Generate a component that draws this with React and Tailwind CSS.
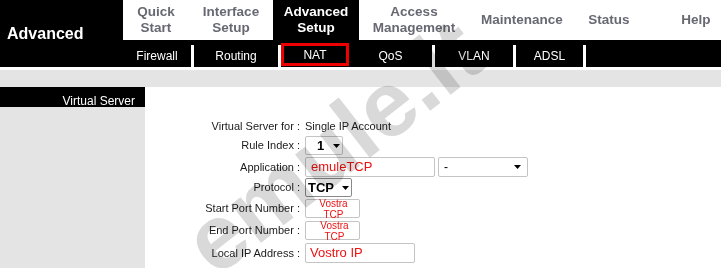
const topNav = [
  { label: ["Quick", "Start"], w: "w-[66px]" },
  { label: ["Interface", "Setup"], w: "w-[84px]" },
  { label: ["Advanced", "Setup"], w: "w-[86px]", active: true },
  { label: ["Access", "Management"], w: "w-[110px]" },
  { label: ["Maintenance"], w: "w-[106px]" },
  { label: ["Status"], w: "w-[68px]" },
];

const Arrow = () => (
  <svg width="8" height="4" viewBox="0 0 8 4" className="block">
    <path d="M0 0H7L3.5 4Z" fill="#000" />
  </svg>
);

const Sep = () => <div className="w-[3px] h-[22px] bg-white self-end" />;

const SubItem = ({ children, w }) => (
  <div className={`${w} h-[22px] self-end flex items-center justify-center`}>{children}</div>
);

const Row = ({ label, className, children }) => (
  <div className={`flex items-center ${className}`}>
    <div className="w-[155px] text-right text-[11px] text-[#1b1b1b] leading-none">{label}</div>
    <div className="ml-[5px] flex items-center gap-[3px]">{children}</div>
  </div>
);

export default function App() {
  return (
    <div className="relative w-[721px] h-[268px] overflow-hidden bg-white font-['Liberation_Sans',Arial,sans-serif]">
      {/* header */}
      <div className="flex h-[67px]">
        <div className="w-[124px] bg-black flex items-center pl-[7px] text-white font-bold text-[16px]">
          Advanced
        </div>
        <div className="flex-1 flex flex-col">
          <div className="h-[40px] flex">
            {topNav.map((n) => (
              <div
                key={n.label.join(" ")}
                className={`${n.w} flex flex-col items-center justify-center text-[13.5px] font-bold leading-[16px] ${
                  n.active ? "bg-black text-white" : "text-[#686873]"
                }`}
              >
                {n.label.map((l) => (
                  <span key={l}>{l}</span>
                ))}
              </div>
            ))}
            <div className="w-[28px]" />
            <div className="w-[50px] flex items-center justify-center text-[13.5px] font-bold text-[#686873]">Help</div>
          </div>
          <div className="h-[27px] bg-black flex text-white text-[12px]">
            <SubItem w="w-[68px]">Firewall</SubItem>
            <Sep />
            <SubItem w="w-[84px]">Routing</SubItem>
            <Sep />
            <div className="w-[68px] h-[23px] mt-[3px] border-[3px] border-[#ee0000] flex items-center justify-center">NAT</div>
            <SubItem w="w-[83px]">QoS</SubItem>
            <Sep />
            <SubItem w="w-[78px]">VLAN</SubItem>
            <Sep />
            <SubItem w="w-[67px]">ADSL</SubItem>
            <Sep />
          </div>
        </div>
      </div>

      <div className="h-[3px]" />
      <div className="h-[17px] bg-[#e4e4e4]" />

      {/* body */}
      <div className="flex h-[181px]">
        <div className="w-[145px] bg-[#e4e4e4]">
          <div className="h-[20px] bg-black text-white text-[12px] leading-[14px] text-right pr-[10px] pt-[7px]">
            Virtual Server
          </div>
        </div>
        <div className="flex-1 flex flex-col">
          <Row label="Virtual Server for :" className="mt-[29px] h-[20px]">
            <span className="text-[11px] text-[#1b1b1b]">Single IP Account</span>
          </Row>
          <Row label="Rule Index :" className="h-[19px]">
            <div className="w-[38px] h-[19px] border border-[#c4c4c4] rounded-[2px] flex items-center pl-[11px] gap-[9px]">
              <span className="text-[13px] font-bold leading-none">1</span>
              <Arrow />
            </div>
          </Row>
          <Row label="Application :" className="mt-[2px] h-[20px]">
            <div className="w-[130px] h-[20px] border border-[#c4c4c4] rounded-[2px] flex items-center pl-[5px] text-[13px] text-[#ee1111]">
              emuleTCP
            </div>
            <div className="w-[90px] h-[20px] border border-[#c4c4c4] rounded-[2px] flex items-center justify-between pl-[5px] pr-[5px] text-[12px]">
              <span>-</span>
              <Arrow />
            </div>
          </Row>
          <Row label="Protocol :" className="mt-[1px] h-[19px]">
            <div className="w-[47px] h-[19px] border border-[#8a8a8a] rounded-[2px] flex items-center pl-[2px] gap-[8px]">
              <span className="text-[13px] font-bold leading-none">TCP</span>
              <Arrow />
            </div>
          </Row>
          <Row label="Start Port Number :" className="mt-[2px] h-[19px]">
            <div className="w-[55px] h-[19px] border border-[#c4c4c4] rounded-[2px] flex flex-col items-center justify-center text-[10px] leading-[11px] text-[#ee1111] pl-[2px]">
              <span>Vostra</span>
              <span>TCP</span>
            </div>
          </Row>
          <Row label="End Port Number :" className="mt-[3px] h-[19px]">
            <div className="w-[55px] h-[19px] border border-[#c4c4c4] rounded-[2px] flex flex-col items-center justify-center text-[10px] leading-[11px] text-[#ee1111] pl-[4px]">
              <span>Vostra</span>
              <span>TCP</span>
            </div>
          </Row>
          <Row label="Local IP Address :" className="mt-[3px] h-[20px]">
            <div className="w-[110px] h-[20px] border border-[#c4c4c4] rounded-[2px] flex items-center pl-[4px] text-[13px] text-[#ee1111]">
              Vostro IP
            </div>
          </Row>
        </div>
      </div>

      {/* watermark */}
      <div className="pointer-events-none absolute left-[333px] top-[146px] -translate-x-1/2 -translate-y-1/2 -rotate-[38deg] text-[92px] font-bold leading-none text-[#d9d9d9] mix-blend-multiply whitespace-nowrap">
        emule.it
      </div>
    </div>
  );
}
